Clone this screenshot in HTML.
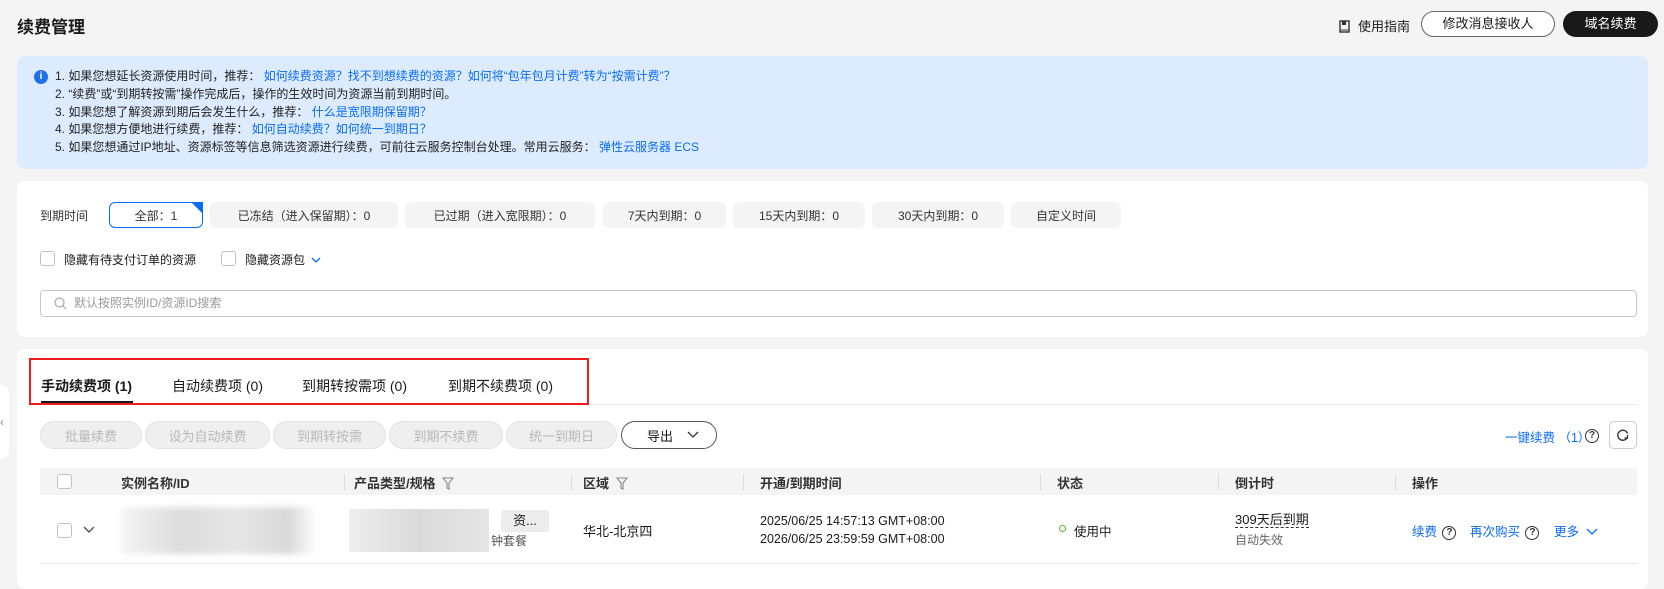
<!DOCTYPE html>
<html><head><meta charset="utf-8"><style>
*{box-sizing:border-box;margin:0;padding:0}
body{width:1664px;height:583px;overflow:hidden;background:#f4f4f4;font-family:"Liberation Sans","Noto Sans CJK SC",sans-serif;color:#191919;font-size:13px;position:relative}
.a{position:absolute;white-space:nowrap}
.card{position:absolute;background:#fff;border-radius:8px;left:17px;width:1631px}
.chip{position:absolute;top:202px;height:26px;background:#f4f4f4;border-radius:6px;font-size:12px;color:#333;display:flex;align-items:center;justify-content:center}
.cb{position:absolute;width:15px;height:15px;border:1px solid #c2c2c2;border-radius:3px;background:#fff}
.btn{position:absolute;top:421px;height:28px;border-radius:14px;background:#efefef;border:1px solid #e2e2e2;color:#b8b8b8;font-size:13px;display:flex;align-items:center;justify-content:center}
.lk{color:#0a6cf5}
.th{position:absolute;top:473px;font-size:13px;color:#333;font-weight:bold}
.dv{position:absolute;top:474px;width:1px;height:16px;background:#dcdcdc}
.q{display:inline-block;width:14px;height:14px;border:1.3px solid #333;border-radius:50%;font-size:10px;line-height:12px;text-align:center;color:#333;vertical-align:middle;font-weight:bold}
</style></head><body>
<div class="a" style="left:17px;top:13px;font-size:17px;font-weight:bold">续费管理</div>
<div class="a" style="left:1339px;top:16px;font-size:13px"><svg width="11" height="13" style="vertical-align:-2px;margin-right:8px"><rect x="1" y="1" width="9" height="11" fill="none" stroke="#333" stroke-width="1.4"/><rect x="3" y="1" width="4" height="4" fill="#333"/><line x1="1" y1="10" x2="10" y2="10" stroke="#333"/></svg>使用指南</div>
<div class="a" style="left:1421px;top:11px;width:134px;height:26px;border:1px solid #666;border-radius:14px;background:#fff;font-size:13px;text-align:center;line-height:24px">修改消息接收人</div>
<div class="a" style="left:1563px;top:11px;width:95px;height:26px;border-radius:14px;background:#191919;color:#fff;font-size:13px;text-align:center;line-height:26px">域名续费</div>

<div class="a" style="left:17px;top:56px;width:1631px;height:113px;background:#ddebfe;border-radius:8px"></div>
<div class="a" style="left:34px;top:70px;width:14px;height:14px;border-radius:50%;background:#2070e8;color:#fff;font-size:10px;text-align:center;line-height:14px;font-weight:bold">i</div>
<div class="a" style="left:55px;top:68px;font-size:12px;line-height:17.8px;color:#222">
1. 如果您想延长资源使用时间，推荐： <span class="lk">如何续费资源？找不到想续费的资源？如何将“包年包月计费”转为“按需计费”？</span><br>
2. “续费”或“到期转按需”操作完成后，操作的生效时间为资源当前到期时间。<br>
3. 如果您想了解资源到期后会发生什么，推荐： <span class="lk">什么是宽限期保留期？</span><br>
4. 如果您想方便地进行续费，推荐： <span class="lk">如何自动续费？如何统一到期日？</span><br>
5. 如果您想通过IP地址、资源标签等信息筛选资源进行续费，可前往云服务控制台处理。常用云服务： <span class="lk">弹性云服务器 ECS</span></div>

<div class="card" style="top:181px;height:156px"></div>
<div class="a" style="left:40px;top:207px;font-size:12px;color:#333">到期时间</div>
<div class="chip" style="left:109px;width:94px;background:#fff;border:1px solid #0a6cf5">全部：1</div>
<div class="a" style="left:191px;top:202px;width:0;height:0;border-top:12px solid #0a6cf5;border-left:12px solid transparent"></div>
<div class="chip" style="left:210px;width:188px">已冻结（进入保留期）：0</div>
<div class="chip" style="left:405px;width:190px">已过期（进入宽限期）：0</div>
<div class="chip" style="left:603px;width:123px">7天内到期：0</div>
<div class="chip" style="left:733px;width:132px">15天内到期：0</div>
<div class="chip" style="left:872px;width:132px">30天内到期：0</div>
<div class="chip" style="left:1011px;width:110px">自定义时间</div>
<div class="cb" style="left:40px;top:251px"></div>
<div class="a" style="left:64px;top:251px;font-size:12px">隐藏有待支付订单的资源</div>
<div class="cb" style="left:221px;top:251px"></div>
<div class="a" style="left:245px;top:251px;font-size:12px">隐藏资源包 <svg width="10" height="7" style="margin-left:3px"><path d="M1 1l4 4 4-4" fill="none" stroke="#0a6cf5" stroke-width="1.3"/></svg></div>
<div class="a" style="left:40px;top:290px;width:1597px;height:27px;border:1px solid #c8c8c8;border-radius:4px;font-size:12px;color:#999;line-height:25px;padding-left:33px">默认按照实例ID/资源ID搜索</div>
<svg class="a" style="left:54px;top:297px" width="13" height="13"><circle cx="5.5" cy="5.5" r="4.5" fill="none" stroke="#aaa" stroke-width="1.2"/><line x1="9" y1="9" x2="12" y2="12" stroke="#aaa" stroke-width="1.2"/></svg>

<div class="card" style="top:349px;height:240px"></div>
<div class="a" style="left:0;top:385px;width:9px;height:74px;background:#fff;border-radius:0 8px 8px 0;color:#888;font-size:12px;line-height:74px">‹</div>
<div class="a" style="left:40px;top:404px;width:1597px;height:1px;background:#ececec"></div>
<div class="a" style="left:41px;top:376px;font-size:14px;font-weight:bold">手动续费项 (1)</div>
<div class="a" style="left:41px;top:401px;width:92px;height:2px;background:#191919"></div>
<div class="a" style="left:172px;top:376px;font-size:14px">自动续费项 (0)</div>
<div class="a" style="left:302px;top:376px;font-size:14px">到期转按需项 (0)</div>
<div class="a" style="left:448px;top:376px;font-size:14px">到期不续费项 (0)</div>
<div class="a" style="left:29px;top:358px;width:560px;height:47px;border:2px solid #ee1c1c"></div>

<div class="btn" style="left:40px;width:102px">批量续费</div>
<div class="btn" style="left:145px;width:125px">设为自动续费</div>
<div class="btn" style="left:273px;width:113px">到期转按需</div>
<div class="btn" style="left:389px;width:114px">到期不续费</div>
<div class="btn" style="left:506px;width:111px">统一到期日</div>
<div class="btn" style="left:621px;width:96px;background:#fff;border:1px solid #555;color:#191919;justify-content:flex-start;padding-left:25px">导出 <svg width="12" height="8" style="margin-left:14px"><path d="M1 1l5 5 5-5" fill="none" stroke="#333" stroke-width="1.3"/></svg></div>
<div class="a lk" style="left:1505px;top:427px;font-size:12.5px">一键续费 （1）</div>
<div class="a" style="left:1585px;top:427px"><span class="q">?</span></div>
<div class="a" style="left:1609px;top:421px;width:28px;height:28px;border:1px solid #ccc;border-radius:5px"></div>
<svg class="a" style="left:1616px;top:428px" width="14" height="14"><path d="M11.5 5.5A5 5 0 1 0 11 10" fill="none" stroke="#333" stroke-width="1.4"/><path d="M8.5 10l3 0l0-3" fill="none" stroke="#333" stroke-width="1.3"/></svg>

<div class="a" style="left:40px;top:468px;width:1597px;height:27px;background:#f4f4f4"></div>
<div class="cb" style="left:57px;top:474px"></div>
<div class="th" style="left:121px">实例名称/ID</div>
<div class="dv" style="left:344px"></div>
<div class="th" style="left:354px">产品类型/规格 <svg width="12" height="13" style="vertical-align:-2px;margin-left:3px"><path d="M1 1h10l-4 5v6l-2-1v-5z" fill="none" stroke="#888" stroke-width="1.1"/></svg></div>
<div class="dv" style="left:571px"></div>
<div class="th" style="left:583px">区域 <svg width="12" height="13" style="vertical-align:-2px;margin-left:3px"><path d="M1 1h10l-4 5v6l-2-1v-5z" fill="none" stroke="#888" stroke-width="1.1"/></svg></div>
<div class="dv" style="left:743px"></div>
<div class="th" style="left:760px">开通/到期时间</div>
<div class="dv" style="left:1040px"></div>
<div class="th" style="left:1057px">状态</div>
<div class="dv" style="left:1218px"></div>
<div class="th" style="left:1235px">倒计时</div>
<div class="dv" style="left:1395px"></div>
<div class="th" style="left:1412px">操作</div>

<div class="cb" style="left:57px;top:523px"></div>
<svg class="a" style="left:83px;top:526px" width="12" height="8"><path d="M1 1l5 5 5-5" fill="none" stroke="#555" stroke-width="1.4"/></svg>
<div class="a" style="left:122px;top:507px;width:195px;height:47px;background:linear-gradient(90deg,#f4f4f4,#dcdcdc 30%,#e6e6e6 60%,#d8d8d8 85%,#fff);filter:blur(3px)"></div>
<div class="a" style="left:349px;top:509px;width:140px;height:43px;background:linear-gradient(90deg,#eee,#dadada 50%,#e6e6e6)"></div>
<div class="a" style="left:501px;top:510px;width:48px;height:22px;background:#ececec;border-radius:3px;font-size:13px;text-align:center;line-height:22px">资...</div>
<div class="a" style="left:491px;top:532px;font-size:12px;color:#555">钟套餐</div>
<div class="a" style="left:583px;top:521px;font-size:13px">华北-北京四</div>
<div class="a" style="left:760px;top:512px;font-size:12.5px;line-height:18px">2025/06/25 14:57:13 GMT+08:00<br>2026/06/25 23:59:59 GMT+08:00</div>
<div class="a" style="left:1059px;top:525px;width:7px;height:7px;border:1.5px solid #5cb82a;border-radius:50%"></div>
<div class="a" style="left:1074px;top:521px;font-size:12.5px">使用中</div>
<div class="a" style="left:1235px;top:512px;font-size:13px;border-bottom:1px dashed #333;line-height:15px">309天后到期</div>
<div class="a" style="left:1235px;top:531px;font-size:12px;color:#666">自动失效</div>
<div class="a lk" style="left:1412px;top:521px;font-size:12.5px">续费 <span class="q" style="margin-left:2px">?</span></div>
<div class="a lk" style="left:1470px;top:521px;font-size:12.5px">再次购买 <span class="q" style="margin-left:2px">?</span></div>
<div class="a lk" style="left:1554px;top:521px;font-size:12.5px">更多 <svg width="12" height="8" style="margin-left:4px"><path d="M1 1l5 5 5-5" fill="none" stroke="#0a6cf5" stroke-width="1.3"/></svg></div>
<div class="a" style="left:40px;top:563px;width:1597px;height:1px;background:#e8e8e8"></div>
</body></html>
